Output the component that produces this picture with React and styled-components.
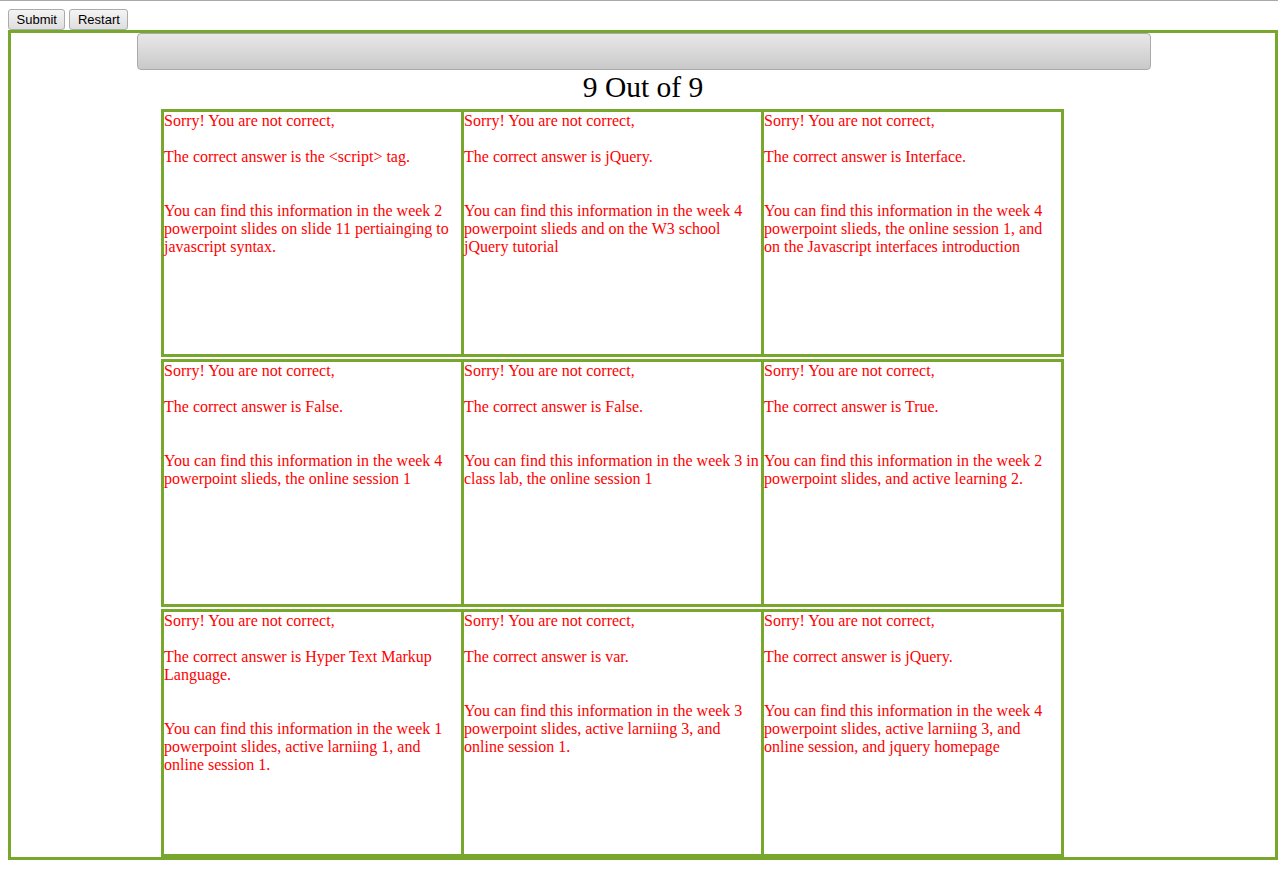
import React from "react";
import styled, { createGlobalStyle } from "styled-components";

const GREEN = "#77a82d";

const Global = createGlobalStyle`
  html {
    border-top: 1px solid #a8a8a8;
    overflow: hidden;
  }
  body {
    margin: 8px 0 0 8px;
    background: #fff;
    font-family: "Liberation Serif", "Times New Roman", serif;
  }
`;

const Toolbar = styled.div`
  display: flex;
  gap: 4px;
  height: 21px;
`;

const Button = styled.button`
  box-sizing: border-box;
  height: 21px;
  padding: 0 7.5px;
  font-family: "Liberation Sans", Arial, sans-serif;
  font-size: 13px;
  color: #000;
  background: linear-gradient(#f4f4f4, #dedede);
  border: 1px solid #ababab;
  border-radius: 3px;
  line-height: 19px;
`;

const Frame = styled.div`
  box-sizing: border-box;
  width: 1270px;
  border: 3px solid ${GREEN};
  display: flex;
  flex-direction: column;
`;

const ProgressBar = styled.div`
  box-sizing: border-box;
  width: 1014px;
  height: 37px;
  margin: 0 auto 0 126px;
  border: 1px solid #a9a9a9;
  border-radius: 4px;
  background: linear-gradient(#e8e8e8, #c9c9c9);
`;

const Title = styled.h1`
  margin: 0;
  height: 39px;
  font-size: 29.5px;
  font-weight: normal;
  line-height: 34px;
  text-align: center;
  color: #000;
`;

const Grid = styled.div`
  display: flex;
  flex-direction: column;
  gap: 2px;
  margin-left: 150px;
  width: 903px;
`;

const Row = styled.div`
  box-sizing: border-box;
  height: 248px;
  display: grid;
  grid-template-columns: repeat(3, 1fr);
  gap: 3px;
  padding: 3px;
  background: ${GREEN};
`;

const Cell = styled.div`
  background: #fff;
  padding: 0 1px 0 0;
  color: #f00;
  font-size: 16px;
  line-height: 18px;
`;

const Para = styled.p`
  margin: 0 0 ${(p) => p.$after}px;
`;

const data = [
  ["The correct answer is the <script> tag.", "You can find this information in the week 2 powerpoint slides on slide 11 pertiainging to javascript syntax."],
  ["The correct answer is jQuery.", "You can find this information in the week 4 powerpoint slieds and on the W3 school jQuery tutorial"],
  ["The correct answer is Interface.", "You can find this information in the week 4 powerpoint slieds, the online session 1, and on the Javascript interfaces introduction"],
  ["The correct answer is False.", "You can find this information in the week 4 powerpoint slieds, the online session 1"],
  ["The correct answer is False.", "You can find this information in the week 3 in class lab, the online session 1"],
  ["The correct answer is True.", "You can find this information in the week 2 powerpoint slides, and active learning 2."],
  ["The correct answer is Hyper Text Markup Language.", "You can find this information in the week 1 powerpoint slides, active larniing 1, and online session 1."],
  ["The correct answer is var.", "You can find this information in the week 3 powerpoint slides, active larniing 3, and online session 1."],
  ["The correct answer is jQuery.", "You can find this information in the week 4 powerpoint slides, active larniing 3, and online session, and jquery homepage"],
];

const rows = [data.slice(0, 3), data.slice(3, 6), data.slice(6, 9)];

export default function App() {
  return (
    <>
      <Global />
      <Toolbar>
        <Button>Submit</Button>
        <Button>Restart</Button>
      </Toolbar>
      <Frame>
        <ProgressBar />
        <Title>9 Out of 9</Title>
        <Grid>
          {rows.map((r, i) => (
            <Row key={i}>
              {r.map(([answer, info], j) => (
                <Cell key={j}>
                  <Para $after={18}>Sorry! You are not correct,</Para>
                  <Para $after={36}>{answer}</Para>
                  <Para $after={0}>{info}</Para>
                </Cell>
              ))}
            </Row>
          ))}
        </Grid>
      </Frame>
    </>
  );
}
